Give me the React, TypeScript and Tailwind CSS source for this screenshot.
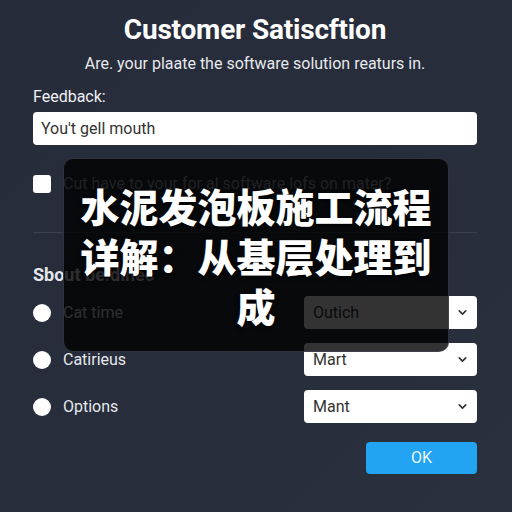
import React from 'react';
import { ChevronDown } from 'lucide-react';

const rows = [
  { label: 'Cat time', value: 'Outich' },
  { label: 'Catirieus', value: 'Mart' },
  { label: 'Options', value: 'Mant' },
];

export default function App() {
  return (
    <div className="relative w-[512px] h-[512px] overflow-hidden bg-gradient-to-br from-[#262c3a] via-[#272d3b] to-[#2a303d] font-['Roboto','Liberation_Sans',sans-serif] text-white">
      <div className="pl-[33px] pr-[35px] pt-[11px]">
        {/* Header */}
        <h1 className="text-center text-[28px] font-bold leading-[38px] tracking-[-0.2px]">Customer Satiscftion</h1>
        <p className="mt-[5px] text-center text-[16px] leading-[20px] text-[#e6e8ec]">
          Are. your plaate the software solution reaturs in.
        </p>

        {/* Feedback */}
        <label className="mt-[12px] block text-[16px] leading-[22px] text-[#eef0f3]">Feedback:</label>
        <div className="mt-[4px] flex h-[33px] items-center rounded-[4px] bg-white px-[8px] text-[16px] text-[#333]">
          You't gell mouth
        </div>

        {/* Checkbox */}
        <div className="mt-[27px] flex h-[24px] items-center gap-[12px]">
          <div className="h-[18px] w-[18px] rounded-[3px] bg-white" />
          <span className="text-[16px] text-[#9ca3af]">Cut have to your for al software lofs on mater?</span>
        </div>

        <div className="mt-[36px] h-px bg-[#3a404d]" />

        <h2 className="mt-[32px] text-[18px] font-bold leading-[20px] text-[#e5e7eb]">Sbout be.dinec</h2>

        {/* Rows */}
        <div className="mt-[11px] flex flex-col gap-[14px]">
          {rows.map((r) => (
            <div key={r.label} className="flex h-[33px] items-center">
              <div className="h-[18px] w-[18px] rounded-full bg-white" />
              <span className="ml-[12px] flex-1 text-[16px] text-[#e5e7eb]">{r.label}</span>
              <div className="flex h-[33px] w-[173px] items-center justify-between rounded-[4px] bg-white pl-[9px] pr-[8px] text-[16px] text-[#333]">
                <span>{r.value}</span>
                <ChevronDown className="h-[13px] w-[13px] text-[#333]" strokeWidth={3} />
              </div>
            </div>
          ))}
        </div>

        <div className="mt-[19px] flex justify-end">
          <button className="h-[32px] w-[111px] rounded-[4px] bg-[#22a4f2] text-[16px] text-[#e8f6ff]">OK</button>
        </div>
      </div>

      {/* Overlay */}
      <div className="absolute left-[63px] top-[158px] flex h-[194px] w-[386px] items-center justify-center rounded-[10px] border border-[#4a4f5a]/60 bg-black/80">
        <p className="px-[14px] text-center text-[39px] font-black leading-[50px] text-white [text-shadow:0_2px_4px_rgba(0,0,0,0.8)] font-['Noto_Sans_CJK_SC',sans-serif]">
          水泥发泡板施工流程详解：从基层处理到成
        </p>
      </div>
    </div>
  );
}
